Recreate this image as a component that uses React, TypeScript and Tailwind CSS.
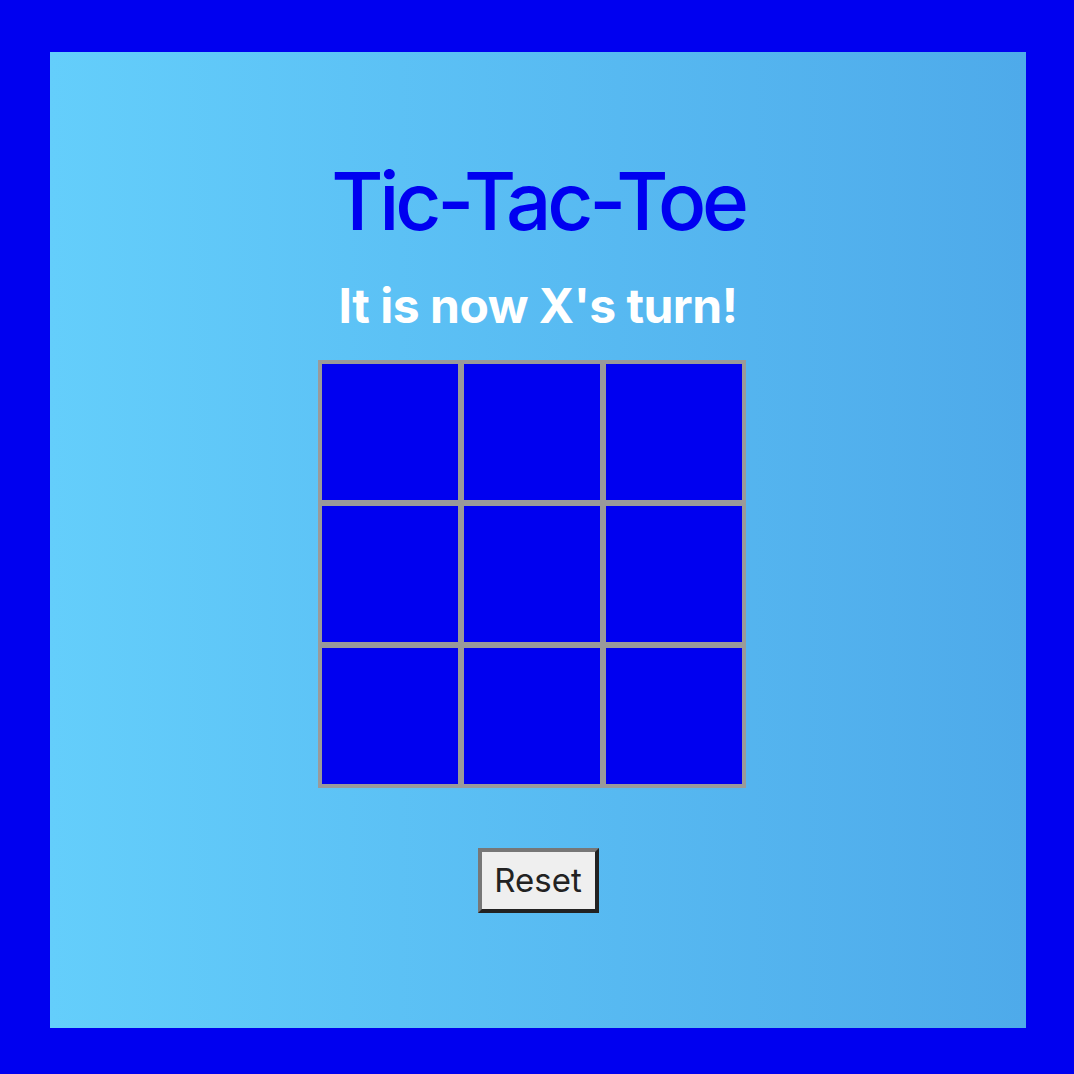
import React, { useState } from 'react';

type Mark = 'X' | 'O' | null;

export default function App() {
    const [cells, setCells] = useState<Mark[]>(Array(9).fill(null));
    const [turn, setTurn] = useState<'X' | 'O'>('X');

    const play = (i: number) => {
        if (cells[i]) return;
        const next = [...cells];
        next[i] = turn;
        setCells(next);
        setTurn(turn === 'X' ? 'O' : 'X');
    };

    const reset = () => {
        setCells(Array(9).fill(null));
        setTurn('X');
    };

    return (
        <div className="min-h-screen bg-[#0000f0] pt-[52px] pl-[50px] font-['Inter',sans-serif]">
            <div className="w-[976px] h-[976px] bg-gradient-to-r from-[#64cefb] to-[#4eaaea] flex flex-col items-center pt-[109px]">
                <h1 className="text-[80px] leading-[80px] font-medium text-[#0000f0] tracking-[-4.2px]">Tic-Tac-Toe</h1>
                <h2 className="mt-[41px] text-[48px] leading-[48px] font-bold text-white tracking-[-0.5px]">It is now {turn}'s turn!</h2>
                <div className="mt-[30px] w-[440px]">
                    <div className="grid grid-cols-[repeat(3,136px)] gap-[6px] p-[4px] bg-[#9a9a9a] w-[428px]">
                        {cells.map((c, i) => (
                            <button
                                key={i}
                                onClick={() => play(i)}
                                className="w-[136px] h-[136px] bg-[#0000f0] text-white text-[64px] font-bold"
                            >
                                {c}
                            </button>
                        ))}
                    </div>
                </div>
                <button
                    onClick={reset}
                    className="mt-[60px] w-[121px] h-[65px] flex items-center justify-center bg-[#efefef] border-4 border-t-[#777777] border-l-[#777777] border-r-[#222222] border-b-[#222222] text-[33px] leading-none text-[#222222]"
                >
                    Reset
                </button>
            </div>
        </div>
    );
}
